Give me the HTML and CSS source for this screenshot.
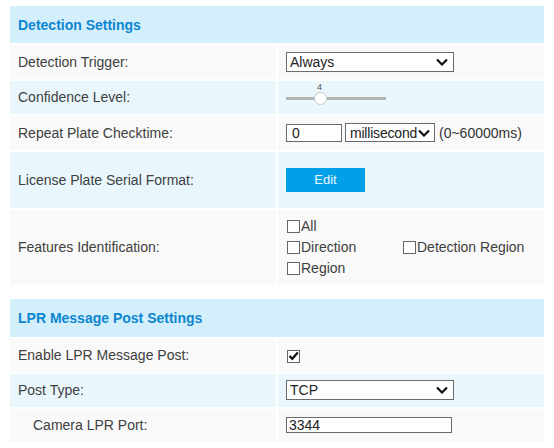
FILE: index.html
```html
<!DOCTYPE html>
<html>
<head>
<meta charset="utf-8">
<link rel="stylesheet" href="styles.css">
</head>
<body>
<table class="cfg">
  <tr><th colspan="2" class="head">Detection Settings</th></tr>
  <tr class="gray">
    <td class="lbl">Detection Trigger:</td>
    <td class="val">
      <div class="select wide"><span>Always</span><svg class="chev" width="12" height="8" viewBox="0 0 12 8"><path d="M1 1.5 L6 6.5 L11 1.5" fill="none" stroke="#111" stroke-width="2.2"/></svg></div>
    </td>
  </tr>
  <tr class="blue">
    <td class="lbl">Confidence Level:</td>
    <td class="val">
      <div class="slider"><span class="tip">4</span><div class="track"></div><div class="thumb"></div></div>
    </td>
  </tr>
  <tr class="gray">
    <td class="lbl">Repeat Plate Checktime:</td>
    <td class="val">
      <div class="inline">
        <div class="input small">0</div>
        <div class="select unit"><span>millisecond</span><svg class="chev" width="12" height="8" viewBox="0 0 12 8"><path d="M1 1.5 L6 6.5 L11 1.5" fill="none" stroke="#111" stroke-width="2.2"/></svg></div>
        <span class="range">(0~60000ms)</span>
      </div>
    </td>
  </tr>
  <tr class="blue tall">
    <td class="lbl">License Plate Serial Format:</td>
    <td class="val"><button class="btn">Edit</button></td>
  </tr>
  <tr class="gray taller">
    <td class="lbl">Features Identification:</td>
    <td class="val">
      <div class="checks">
        <label class="chk"><span class="box"></span>All</label>
        <span></span>
        <label class="chk"><span class="box"></span>Direction</label>
        <label class="chk"><span class="box"></span>Detection Region</label>
        <label class="chk"><span class="box"></span>Region</label>
      </div>
    </td>
  </tr>
</table>

<table class="cfg second">
  <tr><th colspan="2" class="head head2">LPR Message Post Settings</th></tr>
  <tr class="gray">
    <td class="lbl">Enable LPR Message Post:</td>
    <td class="val"><span class="box checked"><svg width="11" height="10" viewBox="0 0 11 10"><path d="M1.5 5 L4.3 7.8 L9.8 1.5" fill="none" stroke="#111" stroke-width="2.2"/></svg></span></td>
  </tr>
  <tr class="blue">
    <td class="lbl">Post Type:</td>
    <td class="val">
      <div class="select wide"><span>TCP</span><svg class="chev" width="12" height="8" viewBox="0 0 12 8"><path d="M1 1.5 L6 6.5 L11 1.5" fill="none" stroke="#111" stroke-width="2.2"/></svg></div>
    </td>
  </tr>
  <tr class="gray">
    <td class="lbl indent">Camera LPR Port:</td>
    <td class="val"><div class="input port">3344</div></td>
  </tr>
</table>
</body>
</html>
```
FILE: styles.css
```css
html, body {
  margin: 0;
  padding: 0;
  background: #ffffff;
}
body {
  padding: 4px 8px 0 8px;
  font-family: "Liberation Sans", Arial, sans-serif;
  font-size: 14px;
  color: #333333;
}
.cfg {
  width: 538px;
  border-collapse: separate;
  border-spacing: 2px;
  table-layout: fixed;
}
.second {
  margin-top: 10px;
}
.head {
  background: #d4effc;
  color: #0c86d0;
  font-weight: bold;
  font-size: 14px;
  text-align: left;
  height: 37px;
  padding: 0 0 0 8px;
}
.head2 { height: 38px; }
.gray td { background: #f9f9f9; }
.blue td { background: #e9f7fd; }
td {
  height: 33.5px;
  padding: 0 0 0 8px;
  vertical-align: middle;
}
.second td { height: 33px; }
.tall td { height: 56px; }
.taller td { height: 75px; }
.lbl {
  width: 50%;
  color: #404040;
}
.indent { padding-left: 23px; }
.select {
  box-sizing: border-box;
  height: 20px;
  border: 1px solid #6a6a6a;
  background: #fff;
  display: flex;
  align-items: center;
  justify-content: space-between;
  padding: 0 5px 0 3px;
  color: #222;
  font-size: 14px;
}
.wide { width: 168px; }
.unit { width: 90px; height: 19px; padding: 0 4px 0 4px; letter-spacing: -0.2px; }
.inline {
  display: flex;
  align-items: center;
  gap: 3px;
}
.input {
  box-sizing: border-box;
  border: 1px solid #6a6a6a;
  background: #fff;
  color: #222;
  font-size: 14px;
  display: flex;
  align-items: center;
}
.small { width: 56px; height: 18px; padding-left: 5px; }
.port { width: 166px; height: 16px; padding-left: 2px; }
.range { color: #333; margin-left: 1px; }
.slider {
  position: relative;
  width: 100px;
  height: 30px;
}
.tip {
  position: absolute;
  left: 31px;
  top: 0;
  font-size: 9px;
  color: #555;
}
.track {
  position: absolute;
  left: 0;
  top: 15px;
  width: 100px;
  height: 3px;
  background: #b3b3b3;
}
.thumb {
  position: absolute;
  left: 28px;
  top: 10px;
  width: 11px;
  height: 11px;
  border-radius: 50%;
  background: #fff;
  border: 1px solid #c8c8c8;
}
.btn {
  width: 79px;
  height: 24px;
  border: none;
  background: #00a0e8;
  color: #eaf8ff;
  font-family: "Liberation Sans", Arial, sans-serif;
  font-size: 13px;
  padding: 0;
  display: block;
}
.checks {
  display: grid;
  grid-template-columns: 116px auto;
  row-gap: 0;
}
.chk {
  display: flex;
  align-items: center;
  height: 21px;
  color: #404040;
}
.box {
  box-sizing: border-box;
  width: 13px;
  height: 13px;
  border: 1px solid #666;
  background: #fff;
  margin: 0 1px 0 1px;
  display: inline-flex;
  align-items: center;
  justify-content: center;
}
.checks .chk:nth-child(5) { grid-column: 1; }
.checked { vertical-align: middle; }
```
